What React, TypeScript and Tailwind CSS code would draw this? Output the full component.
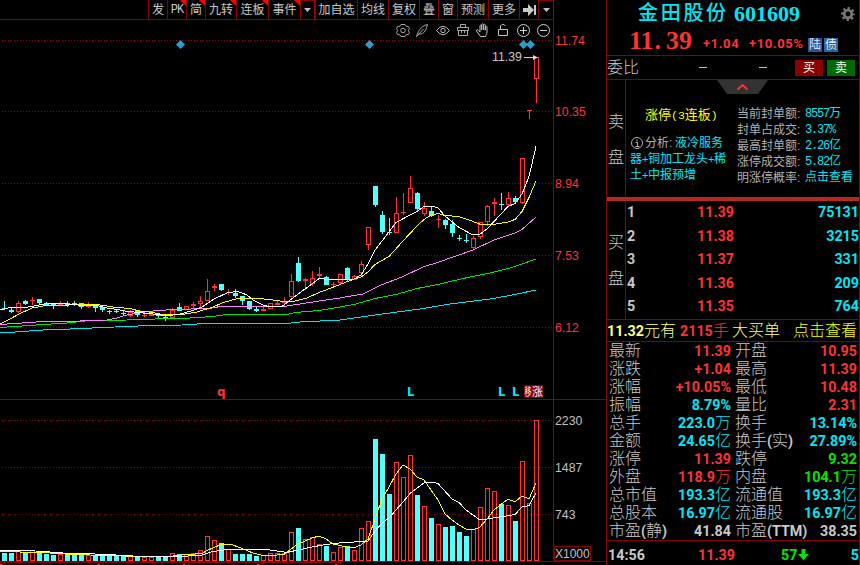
import { Fragment } from "react";
import clsx from "clsx";

const RED = "#ff3232";
const CYAN = "#54ffff";
const LINE = "#870000";

// [up, high, bodyTop, bodyBottom, low, volumeTop]
type Candle = [number, number, number, number, number, number];

const candles: Candle[] = [
  [0, 301, 308, 309, 310, 553],
  [0, 307, 310, 312, 313, 553],
  [1, 301, 303, 312, 313, 551],
  [0, 300, 301, 304, 305, 552],
  [1, 297, 300, 301, 305, 550],
  [0, 299, 299, 303, 305, 552],
  [0, 302, 303, 305, 305, 554],
  [0, 303, 303, 305, 309, 555],
  [1, 301, 303, 305, 305, 554],
  [0, 301, 303, 305, 307, 554],
  [0, 301, 303, 304, 306, 554],
  [0, 303, 303, 307, 309, 555],
  [1, 302, 304, 307, 308, 555],
  [0, 305, 305, 308, 312, 555],
  [0, 307, 307, 310, 312, 556],
  [0, 310, 311, 312, 314, 556],
  [0, 310, 311, 312, 313, 556],
  [0, 310, 313, 314, 315, 556],
  [1, 310, 312, 316, 317, 556],
  [0, 310, 310, 315, 317, 556],
  [1, 313, 315, 316, 317, 557],
  [1, 312, 314, 316, 316, 557],
  [0, 313, 314, 316, 319, 556],
  [0, 316, 317, 319, 321, 556],
  [1, 308, 310, 318, 318, 553],
  [0, 303, 307, 311, 311, 554],
  [1, 306, 306, 310, 310, 554],
  [1, 302, 304, 306, 308, 553],
  [1, 296, 301, 304, 307, 550],
  [1, 279, 291, 301, 301, 536],
  [1, 284, 286, 288, 291, 540],
  [0, 284, 284, 290, 291, 543],
  [1, 289, 292, 293, 295, 549],
  [0, 289, 293, 296, 298, 554],
  [0, 296, 296, 301, 305, 554],
  [0, 301, 301, 309, 310, 554],
  [0, 306, 309, 311, 312, 556],
  [1, 306, 309, 311, 311, 555],
  [1, 303, 303, 309, 309, 553],
  [1, 300, 303, 305, 305, 553],
  [1, 297, 302, 303, 306, 553],
  [1, 274, 281, 297, 297, 532],
  [0, 257, 263, 281, 282, 528],
  [1, 278, 279, 281, 290, 539],
  [1, 271, 278, 284, 286, 537],
  [1, 267, 274, 276, 278, 544],
  [0, 276, 277, 285, 285, 546],
  [1, 282, 284, 285, 286, 552],
  [1, 274, 274, 283, 284, 547],
  [0, 267, 268, 279, 281, 546],
  [1, 275, 276, 280, 280, 550],
  [1, 261, 264, 273, 276, 528],
  [1, 227, 227, 245, 250, 521],
  [0, 186, 186, 205, 207, 439],
  [0, 211, 215, 232, 234, 454],
  [0, 218, 232, 233, 235, 494],
  [1, 197, 213, 233, 233, 462],
  [1, 193, 212, 213, 215, 477],
  [1, 176, 188, 203, 203, 455],
  [0, 192, 193, 209, 211, 495],
  [1, 202, 208, 214, 216, 506],
  [0, 207, 211, 216, 217, 518],
  [1, 215, 219, 220, 228, 524],
  [0, 219, 220, 225, 229, 527],
  [0, 220, 224, 233, 237, 526],
  [0, 235, 238, 239, 241, 532],
  [0, 234, 240, 241, 243, 536],
  [1, 236, 238, 248, 250, 529],
  [1, 222, 222, 237, 239, 507],
  [1, 205, 206, 222, 226, 488],
  [1, 198, 202, 204, 216, 491],
  [0, 193, 204, 205, 210, 504],
  [1, 192, 198, 205, 207, 505],
  [0, 196, 198, 202, 204, 521],
  [1, 158, 158, 203, 204, 461],
  [1, 110, 110, 111, 119, 503],
  [1, 57, 57, 79, 103, 420],
];

const averages = [
  {
    color: "#00e5f0",
    points:
      "0,332 15,332 43,330 70,329 103,327.5 150,325.5 182,325 205,323.5 287,323.5 300,322 340,320 375,315 420,309 450,304 470,301.5 490,299 510,295.5 536,290",
  },
  {
    color: "#00e600",
    points:
      "0,327.5 15,326.5 43,324.5 67,323 90,320.5 127,320 155,319 182,318.5 213,316.5 227,314.5 287,314.5 295,312.5 319,310.5 337,307.5 354,304.5 375,298.5 396,294.5 417,288.5 438,284.5 450,281.5 470,277 490,273 510,268 522,264 536,259",
  },
  {
    color: "#ff80ff",
    points:
      "0,324.5 15,323.5 43,321.5 65,322 87,320.5 107,320 115,318.5 125,315.5 137,313 153,311 173,309.5 210,308.5 220,306.5 277,306.5 287,306 303,303.5 319,301 337,298.5 354,295.5 363,294 380,285.5 389,282 403,276.5 424,266.5 438,262.5 450,258 459,255 473,250 494,240 515,233 522,229.5 536,217",
  },
  {
    color: "#ffff00",
    points:
      "0,324 10,319 20,313.5 32,308 46,305.5 70,305 80,304.5 97,304.5 113,307 130,308.5 140,311 153,312.5 162,314.5 182,314.5 197,312 213,307 223,302.5 238,298.5 258,298.5 270,299.5 283,301.5 293,301.5 307,298 319,292.5 327,289.5 340,284.5 354,279 361,277 368,272 375,264.5 389,256.5 403,241 417,226 424,219.5 431,215 438,213.5 445,215.5 459,216.5 473,221.5 482,225 493,224.5 508,222 515,219.5 522,211.5 529,197.5 536,181",
  },
  {
    color: "#ffffff",
    points:
      "0,310 8,308 25,307.5 32,306.5 46,303.5 63,303.5 77,305 97,305.5 107,308 117,309.5 125,311 143,313 158,314.5 167,316 180,314 193,310.5 202,307 214,299 228,292.5 238,291.5 247,295 253,300 263,305 270,307 282,306.5 298,294 312,284 319,278.5 333,280 354,279 361,275 368,264 375,250 389,232 396,222.5 410,215 417,211.5 424,206.5 433,206.5 438,208 445,216 459,227.5 473,235 480,234 487,229 508,206.5 515,203.5 522,194 529,176.5 536,146.5",
  },
  {
    color: "#ffff00",
    points:
      "0,551 15,551 22,552.5 50,553 73,554.5 107,555.5 143,556.5 173,556 182,555 202,553.5 207,550.5 214,547.5 221,544.5 233,545 242,548.5 253,553 263,555.5 270,555.5 284,554.5 291,549 298,544 312,538 319,536 326,539 333,544 347,547 353,548 361,545 368,539 382,499 389,487 396,474 403,465 410,469 417,477 424,480 431,490 438,500 445,514 452,520 459,525 466,529 473,530 480,527 487,519 494,510 508,499 515,502 522,496 529,499 536,483",
  },
  {
    color: "#ffffff",
    points:
      "0,550.5 28,550.5 50,552 63,553 83,553.5 107,554.5 133,556 177,556.5 200,555.5 213,551.5 228,549.5 267,549.5 287,552.5 298,550 312,547 326,544.5 343,542.5 365,541.5 368,541 375,531 382,523 389,518 403,502 410,493.5 424,483 431,482 438,483.5 452,499 459,502.5 466,510 480,520 487,519 515,514.5 522,507 529,505.5 536,493",
  },
];

const axis = [
  { y: 40, label: "11.74", color: RED },
  { y: 111, label: "10.35", color: RED },
  { y: 183, label: "8.94", color: RED },
  { y: 255, label: "7.53", color: RED },
  { y: 327, label: "6.12", color: RED },
  { y: 420, label: "2230", color: "#c0c0c0" },
  { y: 467, label: "1487", color: "#c0c0c0" },
  { y: 514, label: "743", color: "#c0c0c0" },
];

const bids = [
  ["1", "11.39", "75131"],
  ["2", "11.38", "3215"],
  ["3", "11.37", "331"],
  ["4", "11.36", "209"],
  ["5", "11.35", "764"],
];

const R = "text-[#ff3232]";
const C = "text-[#00e6f6]";
const G = "text-[#00e600]";
const W = "text-[#c8c8c8]";

const stats = [
  ["最新", "11.39", R, "开盘", "10.95", R],
  ["涨跌", "+1.04", R, "最高", "11.39", R],
  ["涨幅", "+10.05%", R, "最低", "10.48", R],
  ["振幅", "8.79%", C, "量比", "2.31", R],
  ["总手", "223.0万", C, "换手", "13.14%", C],
  ["金额", "24.65亿", C, "换手(实)", "27.89%", C],
  ["涨停", "11.39", R, "跌停", "9.32", G],
  ["外盘", "118.9万", R, "内盘", "104.1万", G],
  ["总市值", "193.3亿", C, "流通值", "193.3亿", C],
  ["总股本", "16.97亿", C, "流通股", "16.97亿", C],
  ["市盈(静)", "41.84", W, "市盈(TTM)", "38.35", W],
];

const limitInfo = [
  ["当前封单额", "8557万"],
  ["封单占成交", "3.37%"],
  ["最高封单额", "2.26亿"],
  ["涨停成交额", "5.82亿"],
  ["明涨停概率", "点击查看"],
];

const tools = [
  { label: "发", width: "w-[19px]" },
  { label: "PK", width: "w-[19px]", hot: true },
  { label: "简", width: "w-[19px]", hot: true },
  { label: "九转", width: "w-[31px]", hot: true },
  { label: "连板", width: "w-[32px]", hot: true },
  { label: "事件", width: "w-[32px]", hot: true },
  { label: "▾", width: "w-[15px]" },
  { label: "加自选", width: "w-[42px]" },
  { label: "均线", width: "w-[31px]" },
  { label: "复权", width: "w-[31px]" },
  { label: "叠", width: "w-[19px]" },
  { label: "窗", width: "w-[19px]" },
  { label: "预测", width: "w-[31px]" },
  { label: "更多", width: "w-[31px]" },
  { label: "→|", width: "w-[19px]" },
  { label: "▾", width: "w-[16px]" },
];

// Latin runs are bold, Chinese runs stay light
function Mix({ text }: { text: string }) {
  return (
    <>
      {text.split(/([\x20-\x7e]+)/).map((part, i) =>
        i % 2 ? (
          <span key={i} className="font-[Roboto,sans-serif] text-[14.3px] font-bold">
            {part}
          </span>
        ) : (
          <Fragment key={i}>{part}</Fragment>
        )
      )}
    </>
  );
}

function ToolLabel({ label }: { label: string }) {
  if (label === "▾")
    return (
      <svg width="7" height="4" fill="#c0c0c0">
        <path d="M0 0h7L3.5 4z" />
      </svg>
    );
  if (label === "→|")
    return (
      <svg width="13" height="12" fill="#c8c8c8">
        <path d="M0 4h5V0l6 6-6 6V8H0zM11 1h2v10h-2z" />
      </svg>
    );
  if (label === "PK")
    return (
      <span className="font-['Liberation_Mono',monospace] tracking-[-1px]">{label}</span>
    );
  return <>{label}</>;
}

function Toolbar() {
  return (
    <div className="flex h-5 border-b border-[#870000] pl-[148px] text-[12px] leading-5 text-[#c8c8c8]">
      {tools.map((t, i) => (
        <div
          key={i}
          className={clsx(
            "relative flex h-[19px] shrink-0 items-center justify-center whitespace-nowrap border-l border-[#870000]",
            t.width,
            t.label === "▾" && "border-t border-r border-r-[#a80000]"
          )}
        >
          <ToolLabel label={t.label} />
          {t.hot && (
            <svg className="absolute right-0 top-0" width="6" height="6">
              <path d="M0 0h6v6z" fill="#ff0000" />
            </svg>
          )}
        </div>
      ))}
    </div>
  );
}

function DrawingIcons() {
  return (
    <g fill="none" stroke="#a8a8a8" strokeWidth="1">
      <path d="M401 24.5h4l1.2 1.8 2.2.3 1 2-1 1.9 1 2-1 2-2.2.3-1.2 1.7h-4l-1.2-1.7-2.2-.3-1-2 1-2-1-1.9 1-2 2.2-.3z" />
      <circle cx="403" cy="30.5" r="2.3" />
      <path d="M416.5 36.5c1-4 4-10.5 11-12-1 2-.5 4-2.5 6.5-1.5 2.5-4 3.5-6.5 3M416.5 36.5l7-7.5" />
      <path d="M436.5 30.5q6.5-8.5 13 0q-6.5 8.5-13 0z" stroke="#c0c0c0" />
      <circle cx="443" cy="30.5" r="2.2" stroke="#c0c0c0" />
      <path d="M457.5 27.5h11v3h-11zM458.5 30.5v5h9v-5M460.5 27v-2.5h5v2.5M461.5 30v3M464.5 30v3" />
      <path
        d="M480.5 36.5l-4-5.5c-.5-1.5 1-1.8 1.8-.8l1.7 1.8v-6c0-1.2 1.6-1.2 1.7 0v4v-5.3c0-1.2 1.7-1.2 1.8 0v5v-4.5c0-1.2 1.7-1.2 1.8 0v5v-3.2c.1-1.2 1.7-1.2 1.7 0v5c0 2-1 3-1.5 4.5z"
        stroke="#c0c0c0"
      />
      <path d="M498.5 29.5h9v6h-9zM500.5 29v-3q2.5-3.5 5 0" stroke="#c0c0c0" />
      <circle cx="523.5" cy="30.5" r="6" stroke="#d0d0d0" />
      <path d="M520 30.5h7M523.5 27v7" stroke="#d0d0d0" />
      <circle cx="543.5" cy="30.5" r="6" stroke="#d0d0d0" />
      <path d="M540 30.5h7" stroke="#d0d0d0" />
    </g>
  );
}

function Chart() {
  return (
    <svg
      width="606"
      height="545"
      viewBox="0 20 606 545"
      className="block"
      fontFamily="'Liberation Sans', Arial, sans-serif"
      fontSize="12.3"
    >
      <g shapeRendering="crispEdges">
        {axis.map((a) => (
          <path
            key={a.y}
            d={`M2 ${a.y + 0.5}H553`}
            stroke="#900000"
            strokeDasharray="1 2"
          />
        ))}
        <path d="M553.5 20V561M0 399.5H606" stroke={LINE} />
        <path d="M0 561.5H606" stroke={LINE} />
        <path d="M0 562.5H340" stroke={LINE} />
        <path d="M340.5 562v3M4.5 563v2M102.5 563v2M188.5 563v2M262.5 563v2" stroke={LINE} />
        <path d="M0 564.5h2M97 564.5h2M183 564.5h2M257 564.5h2M335 564.5h2" stroke={RED} />
        {candles.map(([up, high, top, bottom, low, vol], i) => {
          const x = 2 + i * 7;
          const color = up ? RED : CYAN;
          return (
            <g key={i} stroke={color} fill={color}>
              {high < top && <path d={`M${x + 2.5} ${high}V${top}`} />}
              {low > bottom && <path d={`M${x + 2.5} ${bottom}V${low}`} />}
              {up && bottom - top > 2 ? (
                <rect x={x + 0.5} y={top + 0.5} width="4" height={bottom - top - 1} fill="none" />
              ) : (
                <rect x={x} y={top} width="5" height={bottom - top} stroke="none" />
              )}
              {up ? (
                <rect x={x + 0.5} y={vol + 0.5} width="4" height={560 - vol} fill="none" />
              ) : (
                <rect x={x} y={vol} width="5" height={561 - vol} stroke="none" />
              )}
            </g>
          );
        })}
        {averages.map((a, i) => (
          <polyline key={i} points={a.points} fill="none" stroke={a.color} />
        ))}
      </g>
      {[180.5, 369.5, 523.5, 530.5].map((x) => (
        <path key={x} d={`M${x} 40l4.5 4.5-4.5 4.5-4.5-4.5z`} fill="#2e9bcb" />
      ))}
      {axis.map((a) => (
        <text key={a.y} x="555" y={a.y + 5} fill={a.color}>
          {a.label}
        </text>
      ))}
      <text x="492" y="61" fill="#c8c8c8">
        11.39
      </text>
      <path d="M524 57.5h9" stroke="#d8d8d8" />
      <path d="M533 55l5 2.5-5 2.5z" fill="#d8d8d8" />
      <rect x="554.5" y="546.5" width="36" height="14" stroke={LINE} fill="none" />
      <text x="555" y="558" fill="#c0c0c0" fontSize="12">
        X1000
      </text>
      <g fontWeight="bold" fontFamily="'DejaVu Sans', sans-serif">
        <text x="217" y="396" fill={RED} fontSize="12">
          q
        </text>
        <g fill="#00e6f6" fontSize="11.5">
          <text x="407" y="396">L</text>
          <text x="498" y="396">L</text>
          <text x="512" y="396">L</text>
        </g>
      </g>
      <rect x="524" y="385" width="19" height="13" fill="#870000" />
      <g fill="#fff" fontFamily="'Noto Sans CJK SC', sans-serif" fontWeight="400">
        <text x="524.5" y="395.5" fontSize="11" textLength="7" lengthAdjust="spacingAndGlyphs">
          移
        </text>
        <text x="532" y="395.5" fontSize="11">
          涨
        </text>
      </g>
      <DrawingIcons />
    </svg>
  );
}

function QuoteHeader() {
  return (
    <div className="h-14 shrink-0 border-b border-[#870000]">
      <div className="flex h-[27px] items-center pl-[31px]">
        <span className="w-[96px] whitespace-nowrap text-[20px] font-medium leading-[27px] tracking-[2.7px] text-[#00e6f6]">
          金田股份
        </span>
        <span className="font-['Liberation_Serif',serif] text-[22px] font-bold leading-[27px] text-[#00e6f6]">
          601609
        </span>
        <svg className="ml-auto mr-[4px]" width="14" height="14" fill="none" stroke="#757575">
          <circle cx="7" cy="7" r="3.8" strokeWidth="2.8" />
          <circle cx="7" cy="7" r="6" strokeWidth="2" strokeDasharray="2.4 2.312" strokeDashoffset="1.2" />
        </svg>
      </div>
      <div className="flex h-7 items-center pl-[22px] text-[#ff3232]">
        <span className="w-[74px] font-['Liberation_Serif',serif] text-[26px] font-bold leading-7">
          11<span className="pl-[1px] pr-[5px]">.</span>39
        </span>
        <span className="w-[46px] pt-[6px] font-[Roboto,sans-serif] text-[13px] font-bold tracking-[0.6px]">
          +1.04
        </span>
        <span className="w-[59px] pt-[6px] font-[Roboto,sans-serif] text-[13px] font-bold tracking-[0.6px]">
          +10.05%
        </span>
        <span className="mt-[7px] h-[14px] w-[14px] bg-[#3050a0] text-center text-[12px] font-normal leading-[14px] text-[#e0e6f0]">
          陆
        </span>
        <span className="ml-[2px] mt-[7px] h-[14px] w-[14px] bg-[#24689c] text-center text-[12px] font-normal leading-[14px] text-[#e0e6f0]">
          债
        </span>
      </div>
    </div>
  );
}

function SideLabel({ chars }: { chars: string }) {
  return (
    <div className="flex w-[19px] shrink-0 flex-col items-center gap-5 border-r border-[#870000] pt-[34px] text-[16px] font-light leading-4">
      {chars.split("").map((c) => (
        <span key={c}>{c}</span>
      ))}
    </div>
  );
}

function LimitPanel() {
  return (
    <div className="flex h-[117px] shrink-0">
      <SideLabel chars="卖盘" />
      <div className="relative flex flex-1 text-[12px] font-normal leading-4">
        <svg className="absolute left-[91px] top-0" width="51" height="14">
          <path d="M0 0h51L41 14H10z" fill="#333" />
          <path d="M20.5 9.5l5-4.5 5 4.5" fill="none" stroke={RED} strokeWidth="2" />
        </svg>
        <div className="w-[111px] pl-1 pt-[27px] text-[#00e6f6]">
          <p className="whitespace-nowrap pl-[15px] text-[13px] leading-4 text-[#ffff00]">
            涨停<span className="font-['Liberation_Mono',monospace] text-[11.5px]">(3</span>连板
            <span className="font-['Liberation_Mono',monospace] text-[11.5px]">)</span>
          </p>
          <div className="mt-[11px] whitespace-nowrap">
            <div className="flex items-center">
              <svg width="15" height="14" fill="none" stroke="#b0b0b0">
                <circle cx="7" cy="7" r="5.5" />
                <path d="M7 3.5v2M5.5 6.5H7.5V10M5.5 10.5h4" />
              </svg>
              <span className="text-[#b0b0b0]">分析</span>
              <span className="w-[6px] text-[#b0b0b0]">:</span>液冷服务
            </div>
            <p>
              器<span className="inline-block w-[6px] text-[11px]">+</span>铜加工龙头
              <span className="inline-block w-[6px] text-[11px]">+</span>稀
            </p>
            <p>
              土<span className="inline-block w-[6px] text-[11px]">+</span>中报预增
            </p>
          </div>
        </div>
        <div className="pt-[26px]">
          {limitInfo.map(([label, value]) => (
            <div key={label} className="flex whitespace-nowrap">
              <span className="w-[68px] text-[#b0b0b0]">{label}:</span>
              <span className="font-['Liberation_Mono','Noto_Sans_CJK_SC',monospace] text-[#00e6f6]">
                {value.split(/([\d.%]+)/).map((v, i) =>
                  i % 2 ? (
                    <span key={i} className="tracking-[-1.2px]">
                      {v}
                    </span>
                  ) : (
                    v
                  )
                )}
              </span>
            </div>
          ))}
        </div>
      </div>
    </div>
  );
}

function QuotePanel() {
  return (
    <div className="flex h-[565px] w-[254px] flex-col border-x border-[#870000] text-[#c8c8c8]">
      <QuoteHeader />
      <div className="flex h-6 shrink-0 items-center border-b border-[#870000] text-[16px] leading-6">
        <span className="w-[92px]">委比</span>
        <span className="mr-[52px] h-px w-2 bg-[#c0c0c0]" />
        <span className="h-px w-2 bg-[#c0c0c0]" />
        <span className="ml-[28px] h-4 w-7 bg-[#8b0000] text-center text-[12px] font-normal leading-4 text-white">
          买
        </span>
        <span className="ml-1 h-4 w-7 bg-[#006a00] text-center text-[12px] font-normal leading-4 text-white">
          卖
        </span>
      </div>
      <LimitPanel />
      <div className="h-1 shrink-0 bg-[#b5281e]" />
      <div className="flex h-[119px] shrink-0 border-b border-[#870000]">
        <SideLabel chars="买盘" />
        <div className="flex-1 font-[Roboto,sans-serif] text-[14.3px] font-bold">
          {bids.map(([level, price, volume]) => (
            <div key={level} className="flex h-[23.4px] items-center pl-[1px] pt-[1px]">
              <span className="w-[70px]">{level}</span>
              <span className={R}>{price}</span>
              <span className={clsx("ml-auto", C)}>{volume}</span>
            </div>
          ))}
        </div>
      </div>
      <div className="flex h-[22px] shrink-0 items-center whitespace-nowrap border-b border-[#870000] text-[16px] leading-[21px] text-[#ffff80]">
        <span className="w-[73px]">
          <Mix text="11.32" />
          元有
        </span>
        <span className={clsx("w-[52px]", R)}>
          <Mix text="2115手" />
        </span>
        <span>大买单</span>
        <span className="ml-auto mr-[2px] text-[#ffff00]">点击查看</span>
      </div>
      <div className="h-[199px] shrink-0 border-b border-[#870000] text-[16px] leading-[18px]">
        {stats.map(([a, av, ac, b, bv, bc]) => (
          <div key={a} className="flex h-[18px] items-center whitespace-nowrap pl-[2px] pr-[2px]">
            <div className="flex w-[122px] justify-between">
              <span>
                <Mix text={a} />
              </span>
              <span className={ac}>
                <Mix text={av} />
              </span>
            </div>
            <div className="flex flex-1 justify-between pl-1">
              <span>
                <Mix text={b} />
              </span>
              <span className={bc}>
                <Mix text={bv} />
              </span>
            </div>
          </div>
        ))}
      </div>
      <div className="flex h-6 shrink-0 items-center pl-[1px] pt-[3px] font-[Roboto,sans-serif] text-[14.3px] font-bold leading-5">
        <span className="w-[90px]">14:56</span>
        <span className={clsx("w-[83px]", R)}>11.39</span>
        <span className={G}>57</span>
        <svg className="ml-[1px]" width="11" height="11" fill="#00e600">
          <path d="M3.5 0h4v5H11L5.5 11 0 5h3.5z" />
        </svg>
        <span className={clsx("ml-auto", C)}>5</span>
      </div>
    </div>
  );
}

export default function App() {
  return (
    <div className="flex h-[565px] w-[860px] overflow-hidden bg-black font-['Liberation_Sans','Noto_Sans_CJK_SC',sans-serif] font-light">
      <div className="w-[606px] shrink-0 font-normal">
        <div className="w-[554px]">
          <Toolbar />
        </div>
        <Chart />
      </div>
      <QuotePanel />
    </div>
  );
}
